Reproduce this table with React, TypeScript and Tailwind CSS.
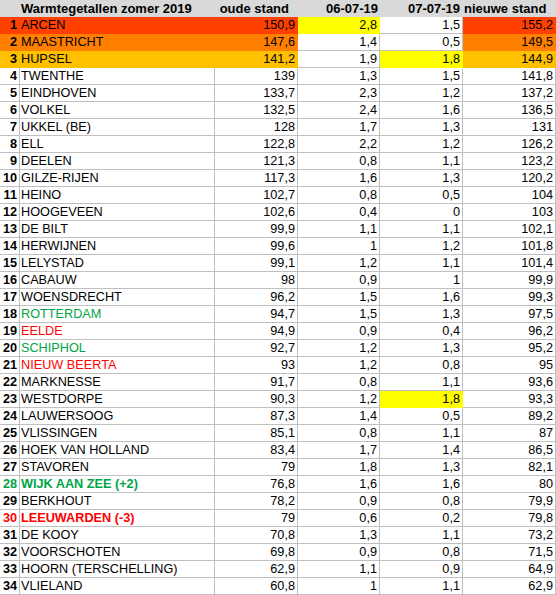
import React from "react";

type Row = {
  n: number;
  name: string;
  a: string;
  b: string;
  c: string;
  d: string;
  rowFill?: string;
  bFill?: string;
  cFill?: string;
  nameColor?: string;
  numColor?: string;
  bold?: boolean;
};

const RED = "#ff4000";
const ORANGE = "#ff8000";
const GOLD = "#ffc000";
const YELLOW = "#ffff00";
const GREEN = "#00a448";
const TRED = "#ff0000";

const rows: Row[] = [
  { n: 1, name: "ARCEN", a: "150,9", b: "2,8", c: "1,5", d: "155,2", rowFill: RED, bFill: YELLOW },
  { n: 2, name: "MAASTRICHT", a: "147,6", b: "1,4", c: "0,5", d: "149,5", rowFill: ORANGE },
  { n: 3, name: "HUPSEL", a: "141,2", b: "1,9", c: "1,8", d: "144,9", rowFill: GOLD, cFill: YELLOW },
  { n: 4, name: "TWENTHE", a: "139", b: "1,3", c: "1,5", d: "141,8" },
  { n: 5, name: "EINDHOVEN", a: "133,7", b: "2,3", c: "1,2", d: "137,2" },
  { n: 6, name: "VOLKEL", a: "132,5", b: "2,4", c: "1,6", d: "136,5" },
  { n: 7, name: "UKKEL (BE)", a: "128", b: "1,7", c: "1,3", d: "131" },
  { n: 8, name: "ELL", a: "122,8", b: "2,2", c: "1,2", d: "126,2" },
  { n: 9, name: "DEELEN", a: "121,3", b: "0,8", c: "1,1", d: "123,2" },
  { n: 10, name: "GILZE-RIJEN", a: "117,3", b: "1,6", c: "1,3", d: "120,2" },
  { n: 11, name: "HEINO", a: "102,7", b: "0,8", c: "0,5", d: "104" },
  { n: 12, name: "HOOGEVEEN", a: "102,6", b: "0,4", c: "0", d: "103" },
  { n: 13, name: "DE BILT", a: "99,9", b: "1,1", c: "1,1", d: "102,1" },
  { n: 14, name: "HERWIJNEN", a: "99,6", b: "1", c: "1,2", d: "101,8" },
  { n: 15, name: "LELYSTAD", a: "99,1", b: "1,2", c: "1,1", d: "101,4" },
  { n: 16, name: "CABAUW", a: "98", b: "0,9", c: "1", d: "99,9" },
  { n: 17, name: "WOENSDRECHT", a: "96,2", b: "1,5", c: "1,6", d: "99,3" },
  { n: 18, name: "ROTTERDAM", a: "94,7", b: "1,5", c: "1,3", d: "97,5", nameColor: GREEN },
  { n: 19, name: "EELDE", a: "94,9", b: "0,9", c: "0,4", d: "96,2", nameColor: TRED },
  { n: 20, name: "SCHIPHOL", a: "92,7", b: "1,2", c: "1,3", d: "95,2", nameColor: GREEN },
  { n: 21, name: "NIEUW BEERTA", a: "93", b: "1,2", c: "0,8", d: "95", nameColor: TRED },
  { n: 22, name: "MARKNESSE", a: "91,7", b: "0,8", c: "1,1", d: "93,6" },
  { n: 23, name: "WESTDORPE", a: "90,3", b: "1,2", c: "1,8", d: "93,3", cFill: YELLOW },
  { n: 24, name: "LAUWERSOOG", a: "87,3", b: "1,4", c: "0,5", d: "89,2" },
  { n: 25, name: "VLISSINGEN", a: "85,1", b: "0,8", c: "1,1", d: "87" },
  { n: 26, name: "HOEK VAN HOLLAND", a: "83,4", b: "1,7", c: "1,4", d: "86,5" },
  { n: 27, name: "STAVOREN", a: "79", b: "1,8", c: "1,3", d: "82,1" },
  { n: 28, name: "WIJK AAN ZEE (+2)", a: "76,8", b: "1,6", c: "1,6", d: "80", nameColor: GREEN, numColor: GREEN, bold: true },
  { n: 29, name: "BERKHOUT", a: "78,2", b: "0,9", c: "0,8", d: "79,9" },
  { n: 30, name: "LEEUWARDEN (-3)", a: "79", b: "0,6", c: "0,2", d: "79,8", nameColor: TRED, numColor: TRED, bold: true },
  { n: 31, name: "DE KOOY", a: "70,8", b: "1,3", c: "1,1", d: "73,2" },
  { n: 32, name: "VOORSCHOTEN", a: "69,8", b: "0,9", c: "0,8", d: "71,5" },
  { n: 33, name: "HOORN (TERSCHELLING)", a: "62,9", b: "1,1", c: "0,9", d: "64,9" },
  { n: 34, name: "VLIELAND", a: "60,8", b: "1", c: "1,1", d: "62,9" },
];

const GRID = "#c0c0c0";

function Cell({
  w,
  fill,
  align = "right",
  color,
  bold,
  children,
}: {
  w: string;
  fill?: string;
  align?: "left" | "right";
  color?: string;
  bold?: boolean;
  children: React.ReactNode;
}) {
  const bc = fill ?? GRID;
  return (
    <div
      className={`${w} h-[17px] shrink-0 border-r border-b leading-[16px] whitespace-nowrap overflow-visible ${
        align === "right" ? "text-right pr-[2px]" : "text-left pl-[1px]"
      } ${bold ? "font-bold" : ""}`}
      style={{ backgroundColor: fill ?? "#ffffff", borderColor: bc, color: color ?? "#000000" }}
    >
      {children}
    </div>
  );
}

export default function App() {
  return (
    <div
      className="w-[556px] h-[595px] bg-white text-[12.7px] overflow-hidden"
      style={{ fontFamily: '"Liberation Sans", Arial, sans-serif' }}
    >
      <div className="flex h-[17px] bg-[#d9d9d9] font-bold text-[13px] leading-[17px] whitespace-nowrap text-black">
        <div className="w-[20px] shrink-0" />
        <div className="w-[195px] shrink-0 pl-[1px]">Warmtegetallen zomer 2019</div>
        <div className="w-[83px] shrink-0 text-right pr-[9px]">oude stand</div>
        <div className="w-[82px] shrink-0 text-right pr-[2px]">06-07-19</div>
        <div className="w-[83px] shrink-0 text-right pr-[3px]">07-07-19</div>
        <div className="w-[93px] shrink-0 pl-[1px]">nieuwe stand</div>
      </div>
      {rows.map((r) => (
        <div key={r.n} className="flex">
          <Cell w="w-[20px]" fill={r.rowFill} bold color={r.numColor}>
            {r.n}
          </Cell>
          <Cell w="w-[195px]" fill={r.rowFill} align="left" color={r.nameColor} bold={r.bold}>
            {r.name}
          </Cell>
          <Cell w="w-[83px]" fill={r.rowFill}>
            {r.a}
          </Cell>
          <Cell w="w-[82px]" fill={r.bFill}>
            {r.b}
          </Cell>
          <Cell w="w-[83px]" fill={r.cFill}>
            {r.c}
          </Cell>
          <Cell w="w-[93px]" fill={r.rowFill}>
            {r.d}
          </Cell>
        </div>
      ))}
    </div>
  );
}
